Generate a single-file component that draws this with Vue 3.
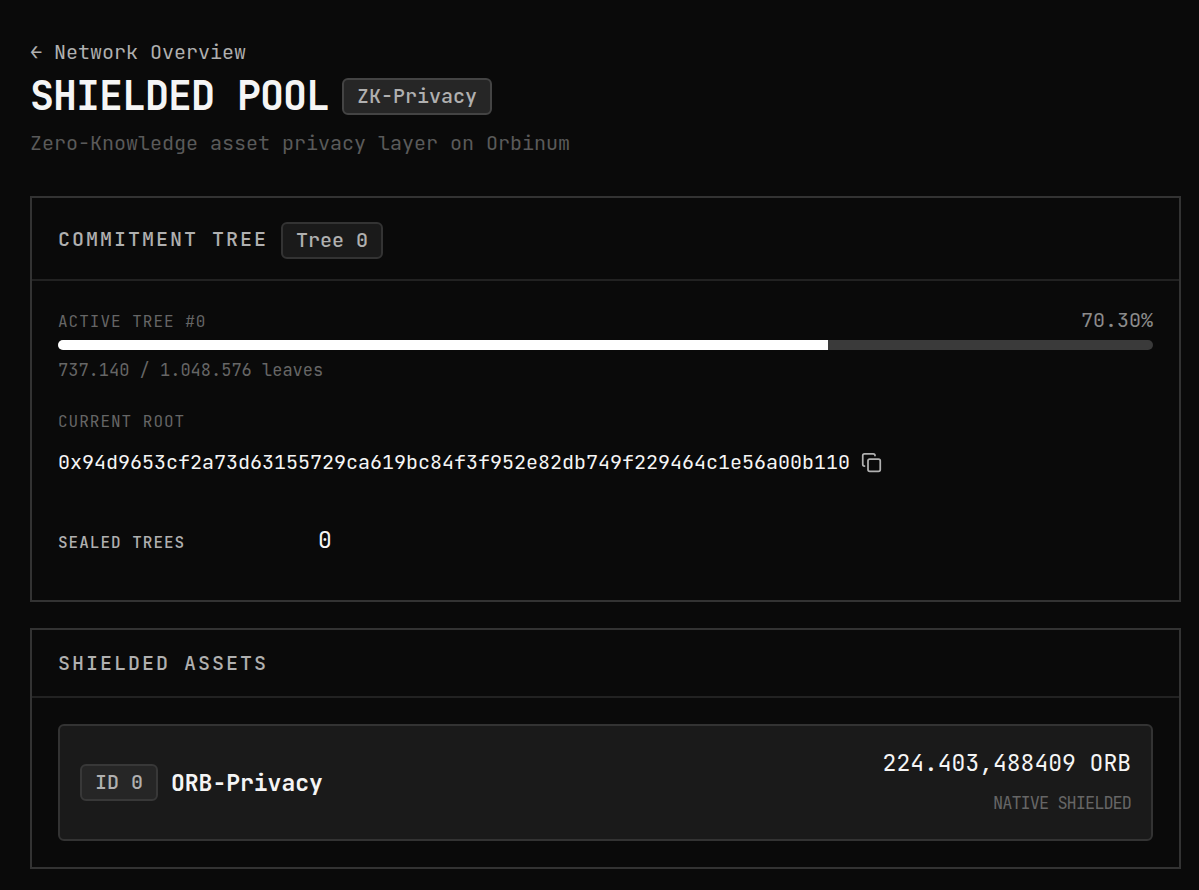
<script setup>
import { ref } from 'vue'

const used = 737140
const capacity = 1048576
const percent = (used / capacity) * 100
const format = (n) => String(n).replace(/\B(?=(\d{3})+$)/g, '.')

const root = ref('0x94d9653cf2a73d63155729ca619bc84f3f952e82db749f229464c1e56a00b110')
const copyRoot = () => navigator.clipboard?.writeText(root.value)
</script>

<template>
  <main class="page">
    <header class="intro">
      <a class="back" href="#network">← Network Overview</a>
      <div class="title-row">
        <h1>SHIELDED POOL</h1>
        <span class="badge strong">ZK-Privacy</span>
      </div>
      <p class="subtitle">Zero-Knowledge asset privacy layer on Orbinum</p>
    </header>

    <section class="panel">
      <div class="panel-head with-badge">
        <h2>COMMITMENT TREE</h2>
        <span class="badge">Tree 0</span>
      </div>
      <div class="panel-body">
        <div class="progress-row">
          <span class="label">ACTIVE TREE #0</span>
          <span class="percent">{{ percent.toFixed(2) }}%</span>
        </div>
        <div class="track" role="progressbar" aria-label="Active tree usage" :aria-valuenow="percent">
          <div class="fill" :style="{ width: percent + '%' }"></div>
        </div>
        <p class="leaves">{{ format(used) }} / {{ format(capacity) }} leaves</p>

        <h3 class="label root-label">CURRENT ROOT</h3>
        <div class="root">
          <code>{{ root }}</code>
          <button type="button" class="copy" aria-label="Copy root" @click="copyRoot">
            <svg viewBox="0 0 24 24" fill="none" stroke="currentColor" stroke-width="2" stroke-linecap="round" stroke-linejoin="round">
              <rect x="8" y="8" width="14" height="14" rx="2" />
              <path d="M4 16c-1.1 0-2-.9-2-2V4c0-1.1.9-2 2-2h10c1.1 0 2 .9 2 2" />
            </svg>
          </button>
        </div>

        <dl class="sealed">
          <dt class="label">SEALED TREES</dt>
          <dd>0</dd>
        </dl>
      </div>
    </section>

    <section class="panel">
      <div class="panel-head">
        <h2>SHIELDED ASSETS</h2>
      </div>
      <div class="panel-body">
        <article class="asset">
          <div class="asset-id">
            <span class="badge id">ID 0</span>
            <strong>ORB-Privacy</strong>
          </div>
          <div class="asset-value">
            <span class="amount">224.403,488409 ORB</span>
            <span class="kind">NATIVE SHIELDED</span>
          </div>
        </article>
      </div>
    </section>
  </main>
</template>

<style>
html,
body {
  margin: 0;
  background: #0a0a0a;
}
</style>

<style scoped>
.page {
  box-sizing: border-box;
  padding: 40px 18px 20px 30px;
  color: #f5f5f5;
  font-family: "JetBrains Mono", "DejaVu Sans Mono", monospace;
  font-size: 20px;
  line-height: 24px;
}
h1, h2, h3, p, dl, dd {
  margin: 0;
}
.back {
  display: block;
  width: max-content;
  color: #b0b0b0;
  text-decoration: none;
}
.title-row {
  display: flex;
  align-items: center;
  gap: 13px;
  margin-top: 8px;
}
h1 {
  font-size: 40px;
  line-height: 48px;
  font-weight: 700;
  letter-spacing: -1px;
}
.badge {
  display: inline-block;
  padding: 4px 13px;
  border: 2px solid #333;
  border-radius: 6px;
  background: #1a1a1a;
  color: #b0b0b0;
  font-weight: 500;
  line-height: 25px;
}
.badge.strong {
  background: #262626;
  border-color: #444;
}
.badge.id {
  background: #262626;
  border-color: #383838;
}
.subtitle {
  margin-top: 11px;
  color: #5a5a5a;
}
.panel {
  margin-top: 26px;
  border: 2px solid #333;
}
.intro + .panel {
  margin-top: 41px;
}
.panel-head {
  padding: 20px 26px;
  border-bottom: 2px solid #222;
}
.panel-head.with-badge {
  padding-top: 24px;
}
h2 {
  font-size: 20px;
  line-height: 26px;
  font-weight: 500;
  letter-spacing: 2px;
  color: #b0b0b0;
}
.with-badge h2 {
  display: inline-block;
}
.with-badge .badge {
  margin-left: 13px;
  vertical-align: middle;
}
.panel-body {
  padding: 26px;
}
.progress-row {
  display: flex;
  justify-content: space-between;
  align-items: baseline;
  line-height: 27px;
}
.label {
  font-size: 16px;
  line-height: 20px;
  font-weight: 400;
  letter-spacing: 1px;
  color: #666;
}
.percent {
  color: #8c8c8c;
}
.track {
  height: 10px;
  margin-top: 6px;
  border-radius: 5px;
  overflow: hidden;
  background: #3a3a3a;
}
.fill {
  height: 100%;
  background: #fff;
}
.leaves {
  margin-top: 9px;
  font-size: 17px;
  line-height: 22px;
  color: #666;
}
.root-label {
  margin-top: 31px;
}
.root {
  display: flex;
  align-items: center;
  gap: 11px;
  margin-top: 18px;
}
.root code {
  font-family: inherit;
  overflow-wrap: anywhere;
}
.copy {
  display: flex;
  flex: none;
  padding: 0;
  border: 0;
  background: none;
  color: #b0b0b0;
  cursor: pointer;
}
.copy svg {
  width: 21px;
  height: 21px;
}
.sealed {
  display: grid;
  grid-template-columns: 260px 1fr;
  align-items: baseline;
  margin-top: 32px;
  padding: 20px 0;
}
.sealed .label {
  font-weight: 500;
  color: #b0b0b0;
}
.sealed dd {
  font-size: 23px;
  line-height: 28px;
}
.asset {
  display: flex;
  justify-content: space-between;
  align-items: center;
  padding: 23px 20px;
  border: 2px solid #333;
  border-radius: 6px;
  background: #1a1a1a;
}
.asset-id {
  display: flex;
  align-items: center;
  gap: 13px;
}
.asset-id strong {
  font-size: 23px;
  line-height: 30px;
  font-weight: 600;
}
.asset-value {
  display: flex;
  flex-direction: column;
  align-items: flex-end;
  gap: 13px;
}
.amount {
  font-size: 23px;
  line-height: 28px;
}
.kind {
  font-size: 17px;
  line-height: 26px;
  letter-spacing: -1px;
  color: #666;
}
</style>
